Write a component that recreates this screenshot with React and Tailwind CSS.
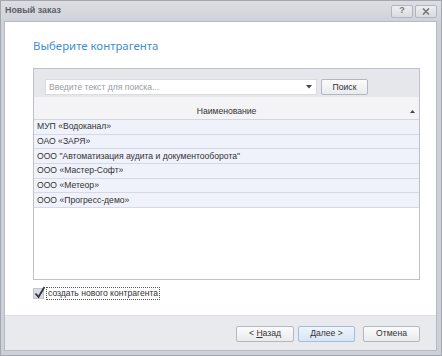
import React from "react";

const rows = [
  "МУП «Водоканал»",
  "ОАО «ЗАРЯ»",
  'ООО "Автоматизация аудита и документооборота"',
  "ООО «Мастер-Софт»",
  "ООО «Метеор»",
  "ООО «Прогресс-демо»",
];

function Btn({ children, primary, className = "" }) {
  return (
    <div
      className={
        "w-[57px] h-[16px] flex items-center justify-center rounded-[2px] border text-[8.6px] text-[#333] " +
        (primary
          ? "border-[#a7bcd8] bg-gradient-to-b from-[#eef4fc] to-[#d9e6f6] "
          : "border-[#b4b7bf] bg-gradient-to-b from-[#fbfbfc] to-[#eaebee] ") +
        className
      }
    >
      {children}
    </div>
  );
}

export default function App() {
  return (
    <div
      className="w-[442px] h-[356px] flex flex-col bg-[#cdd0d6] border border-[#a3a7b0] overflow-hidden"
      style={{ fontFamily: '"Liberation Sans", Arial, sans-serif' }}
    >
      {/* title bar */}
      <div className="h-[20px] flex items-center pl-[4px] pr-[4px] bg-gradient-to-b from-[#dcdee3] to-[#cfd2d8]">
        <div className="flex-1 text-[8.9px] font-bold text-[#5d616b]">Новый заказ</div>
        <div className="flex gap-[2px]">
          <div className="w-[22px] h-[13px] rounded-[2px] border border-[#b2b5bd] bg-gradient-to-b from-[#eceef1] to-[#d9dbe0] flex items-center justify-center text-[9px] font-bold text-[#777]">
            ?
          </div>
          <div className="w-[22px] h-[13px] rounded-[2px] border border-[#b2b5bd] bg-gradient-to-b from-[#eceef1] to-[#d9dbe0] flex items-center justify-center">
            <svg width="8" height="7" viewBox="0 0 8 7">
              <path d="M1 0.5 L7 6.5 M7 0.5 L1 6.5" stroke="#777" strokeWidth="1.6" />
            </svg>
          </div>
        </div>
      </div>
      {/* client */}
      <div className="flex-1 flex flex-col ml-[3px] mr-[4px] mb-[4px] border border-[#b7bac2]">
        <div className="flex-1 bg-white flex flex-col pl-[28px] pr-[16px]">
          <div
            className="mt-[14px] h-[20px] text-[11.4px] text-[#3c8fd2] leading-[20px]"
            style={{ fontFamily: '"Noto Sans", "Open Sans", sans-serif' }}
          >
            Выберите контрагента
          </div>
          {/* panel */}
          <div className="mt-[12px] h-[212px] border border-[#bfc2ca] flex flex-col">
            <div className="h-[28px] bg-[#e6e7eb] flex items-start pt-[10px] pl-[11px] gap-[4px]">
              <div className="w-[272px] h-[16px] bg-white border border-[#d9dbe0] flex items-center pl-[3px] pr-[4px]">
                <span className="flex-1 text-[8.6px] text-[#9a9ca3]">Введите текст для поиска...</span>
                <svg width="6" height="4" viewBox="0 0 6 4">
                  <path d="M0 0 H6 L3 3.5 Z" fill="#444" />
                </svg>
              </div>
              <div className="w-[47px] h-[16px] rounded-[2px] border border-[#b4b7bf] bg-gradient-to-b from-[#fbfbfc] to-[#eaebee] flex items-center justify-center text-[8.6px] text-[#333]">
                Поиск
              </div>
            </div>
            <div className="h-[23px] bg-[#f4f4f6] border-b border-[#d4d6dc] flex items-end pb-[1px] relative">
              <div className="flex-1 text-center text-[8.6px] text-[#333]">Наименование</div>
              <svg className="absolute right-[4px] top-[13px]" width="5" height="3" viewBox="0 0 5 3">
                <path d="M0 3 H5 L2.5 0 Z" fill="#444" />
              </svg>
            </div>
            {rows.map((r) => (
              <div
                key={r}
                className="h-[14.7px] bg-[#eff1fb] border-b border-[#d6d9e4] flex items-center pl-[3px] text-[8.6px] text-[#333]"
              >
                {r}
              </div>
            ))}
            <div className="flex-1 bg-white" />
          </div>
          <div className="mt-[7px] flex items-center gap-[2px]">
            <div className="w-[11px] h-[11px] bg-[#dcdde2] border border-[#c3c5cc] relative">
              <svg className="absolute left-[0px] top-[-3px]" width="12" height="13" viewBox="0 0 12 13">
                <path d="M1.5 7.5 L4.5 11 L10.5 1" stroke="#2f3440" strokeWidth="1.8" fill="none" />
              </svg>
            </div>
            <div className="border border-dotted border-[#555] px-[1px] h-[13px] flex items-center text-[8.6px] text-[#333]">
              создать нового контрагента
            </div>
          </div>
          <div className="flex-1" />
        </div>
        <div className="h-[35px] bg-[#e9eaee] border-t border-[#dcdde2] flex items-center justify-end gap-[4px] pr-[16px] pt-[1px]">
          <Btn className="w-[58px]">
            &lt;&nbsp;<span className="underline">Н</span>азад
          </Btn>
          <Btn primary>
            <span className="underline">Д</span>алее&nbsp;&gt;
          </Btn>
          <Btn className="ml-[4px]">Отмена</Btn>
        </div>
      </div>
    </div>
  );
}
